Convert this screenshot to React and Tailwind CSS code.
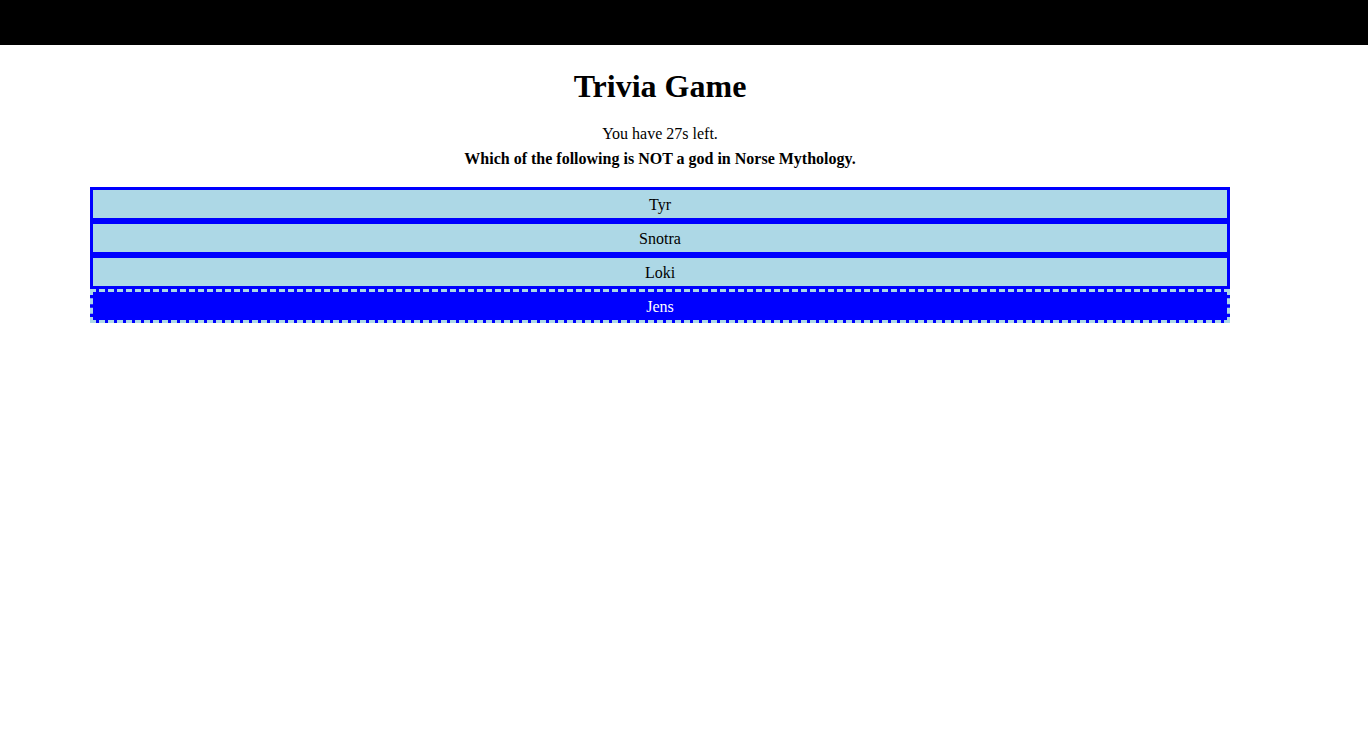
import React from 'react';

const answers = ['Tyr', 'Snotra', 'Loki', 'Jens'];

const App = () => {
  const selected = 'Jens';

  return (
    <div className="min-h-screen bg-white text-black" style={{ fontFamily: '"Liberation Serif", "Times New Roman", serif' }}>
      <div className="h-[45px] bg-black" />
      <main className="w-[1320px] text-center">
        <h1 className="mt-[23px] text-[32px] leading-[37px] font-bold">Trivia Game</h1>
        <p className="mt-[20px] text-[16px] leading-[18px]">You have 27s left.</p>
        <p className="mt-[7px] text-[16px] leading-[18px] font-bold">Which of the following is NOT a god in Norse Mythology.</p>
        <div className="mt-[19px] mx-[90px] flex flex-col">
          {answers.map((a) => (
            <button
              key={a}
              className={
                a === selected
                  ? 'h-[34px] w-full pt-[1px] border-[3px] border-dashed border-[#add8e6] bg-[#0000ff] text-white text-[16px] leading-[18px]'
                  : 'h-[34px] w-full pt-[1px] border-[3px] border-solid border-[#0000ff] bg-[#add8e6] text-black text-[16px] leading-[18px]'
              }
            >
              {a}
            </button>
          ))}
        </div>
      </main>
    </div>
  );
};

export default App;
